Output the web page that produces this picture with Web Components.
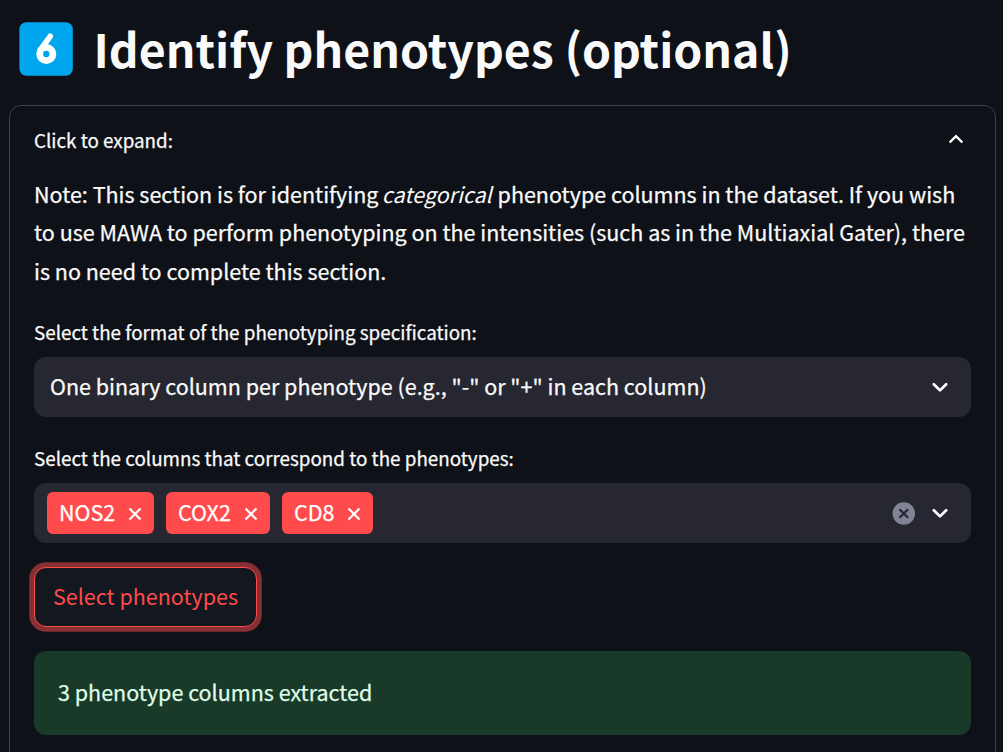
<!DOCTYPE html>
<html lang="en">
<head>
<meta charset="utf-8">
<title>Identify phenotypes</title>
<style>
html,body{margin:0;height:752px;overflow:hidden;background:#0e1117}
body{color:#fafafa;font-family:"Noto Sans CJK SC","Noto Sans",sans-serif;-webkit-text-stroke:.25px currentColor}
</style>
</head>
<body>
<phenotype-page></phenotype-page>
<script>
const define = (name, html) => customElements.define(name, class extends HTMLElement {
  constructor() {
    super();
    this.attachShadow({mode: "open"}).innerHTML = html;
  }
});

define("keycap-badge", `<style>
:host{display:block;width:54px;height:54px;flex:none}svg{display:block}
</style><svg width="54" height="54" viewBox="0 0 54 54"><rect x=".4" y=".2" width="53.4" height="53.5" rx="7" fill="#00a6ed"/>
<path d="M31.2 14.3 21.3 28" stroke="#fff" stroke-width="5.6" stroke-linecap="round"/><circle cx="27.3" cy="32" r="6.6" fill="none" stroke="#fff" stroke-width="6.8"/></svg>`);

define("section-title", `<style>
:host{display:flex;gap:20.5px;padding:22px 0 0 19px;height:83px;box-sizing:border-box}
h1{margin:0;font-size:46.45px;font-weight:700;line-height:52px;white-space:nowrap;-webkit-text-stroke:0}
</style><keycap-badge></keycap-badge><h1><slot></slot></h1>`);

define("chevron-icon", `<style>
:host{display:block;width:24px;height:24px;flex:none}svg{display:block}
.up{display:none}:host([up]) .up{display:block}:host([up]) .down{display:none}
</style><svg class="down" width="24" height="24" viewBox="0 0 24 24" fill="none" stroke="#fff" stroke-width="2.7" stroke-linecap="round" stroke-linejoin="round"><path d="m5.8 9.2 6.2 6.2 6.2-6.2"/></svg>
<svg class="up" width="24" height="24" viewBox="0 0 24 24" fill="none" stroke="#fff" stroke-width="2.4"><path d="m5.6 15.5 6.4-6.4 6.4 6.4"/></svg>`);

define("fold-panel", `<style>
:host{display:block;margin:22px 7px 0 9px;height:680px;box-sizing:border-box;border:1px solid #3e4046;border-radius:12px;padding:0 24px}
header{display:flex;justify-content:space-between;align-items:center;height:69px;padding:0 3px 3px 0;box-sizing:border-box;font-size:18.8px}
</style><header><slot name="label"></slot><chevron-icon up></chevron-icon></header><slot></slot>`);

define("note-text", `<style>
:host{display:block;font-size:21.5px;line-height:38.4px;white-space:nowrap;height:141px}
::slotted(em){margin:0 1px 0 -1.5px;-webkit-text-stroke:0}
</style><slot></slot>`);

define("form-field", `<style>
:host{display:block;height:126px}
label{display:block;height:41px;line-height:32px;font-size:18.82px;white-space:nowrap}
.box{display:flex;align-items:center;height:60px;box-sizing:border-box;background:#262730;border-radius:12px;padding:0 19px 0 16px;font-size:21.5px;white-space:nowrap}
.value{flex:1;display:flex;padding-bottom:4px}
:host([multi]) .box{padding-left:13px}:host([multi]) .value{gap:12px;padding:0}
</style><label><slot name="label"></slot></label><div class="box"><div class="value"><slot></slot></div><slot name="clear"></slot><chevron-icon></chevron-icon></div>`);

define("tag-chip", `<style>
:host{display:flex;align-items:center;justify-content:space-between;height:42px;box-sizing:border-box;background:#ff4b4b;border-radius:6px;padding:0 12px;font-size:21.5px;color:#fff}
svg{display:block;margin-top:1px}span{padding-bottom:4px}
</style><span><slot></slot></span><svg width="14" height="14" viewBox="0 0 14 14" stroke="#fff" stroke-width="2.2"><path d="m1.5 1.5 11 11M12.5 1.5l-11 11"/></svg>`);

define("clear-button", `<style>
:host{display:block;margin-right:13px}svg{display:block}
</style><svg width="23" height="23" viewBox="0 0 23 23"><circle cx="11.8" cy="11.5" r="11.2" fill="#808495"/><path d="m7.5 7.2 8.6 8.6M16.1 7.2l-8.6 8.6" stroke="#262730" stroke-width="2.3"/></svg>`);

define("action-button", `<style>
:host{display:block;height:84px}
button{display:block;width:223px;height:60px;box-sizing:border-box;background:#13171f;border:1.4px solid #ff4b4b;border-radius:12px;box-shadow:0 0 0 4.8px #872f33;color:#ff4b4b;font:21.5px "Noto Sans CJK SC","Noto Sans",sans-serif;-webkit-text-stroke:0;padding:0 0 4px;white-space:nowrap}
</style><button><slot></slot></button>`);

define("success-alert", `<style>
:host{display:flex;align-items:center;height:84px;box-sizing:border-box;padding:0 0 4px 24px;border-radius:12px;background:#193929;color:#dffde9;font-size:21.5px;white-space:nowrap}
</style><span><slot></slot></span>`);

define("phenotype-page", `<style>:host{display:block;height:752px;overflow:hidden}.n{width:107px}.x{width:104px}.c{width:91px}action-button{margin-top:-1px}</style>
<section-title>Identify phenotypes (optional)</section-title>
<fold-panel><span slot="label">Click to expand:</span>
<note-text>Note: This section is for identifying <em>categorical</em> phenotype columns in the dataset. If you wish<br>to use MAWA to perform phenotyping on the intensities (such as in the Multiaxial Gater), there<br>is no need to complete this section.</note-text>
<form-field><span slot="label">Select the format of the phenotyping specification:</span>One binary column per phenotype (e.g., "-" or "+" in each column)</form-field>
<form-field multi><span slot="label">Select the columns that correspond to the phenotypes:</span><tag-chip class="n">NOS2</tag-chip><tag-chip class="x">COX2</tag-chip><tag-chip class="c">CD8</tag-chip><clear-button slot="clear"></clear-button></form-field>
<action-button>Select phenotypes</action-button>
<success-alert>3 phenotype columns extracted</success-alert>
</fold-panel>`);
</script>
</body>
</html>
